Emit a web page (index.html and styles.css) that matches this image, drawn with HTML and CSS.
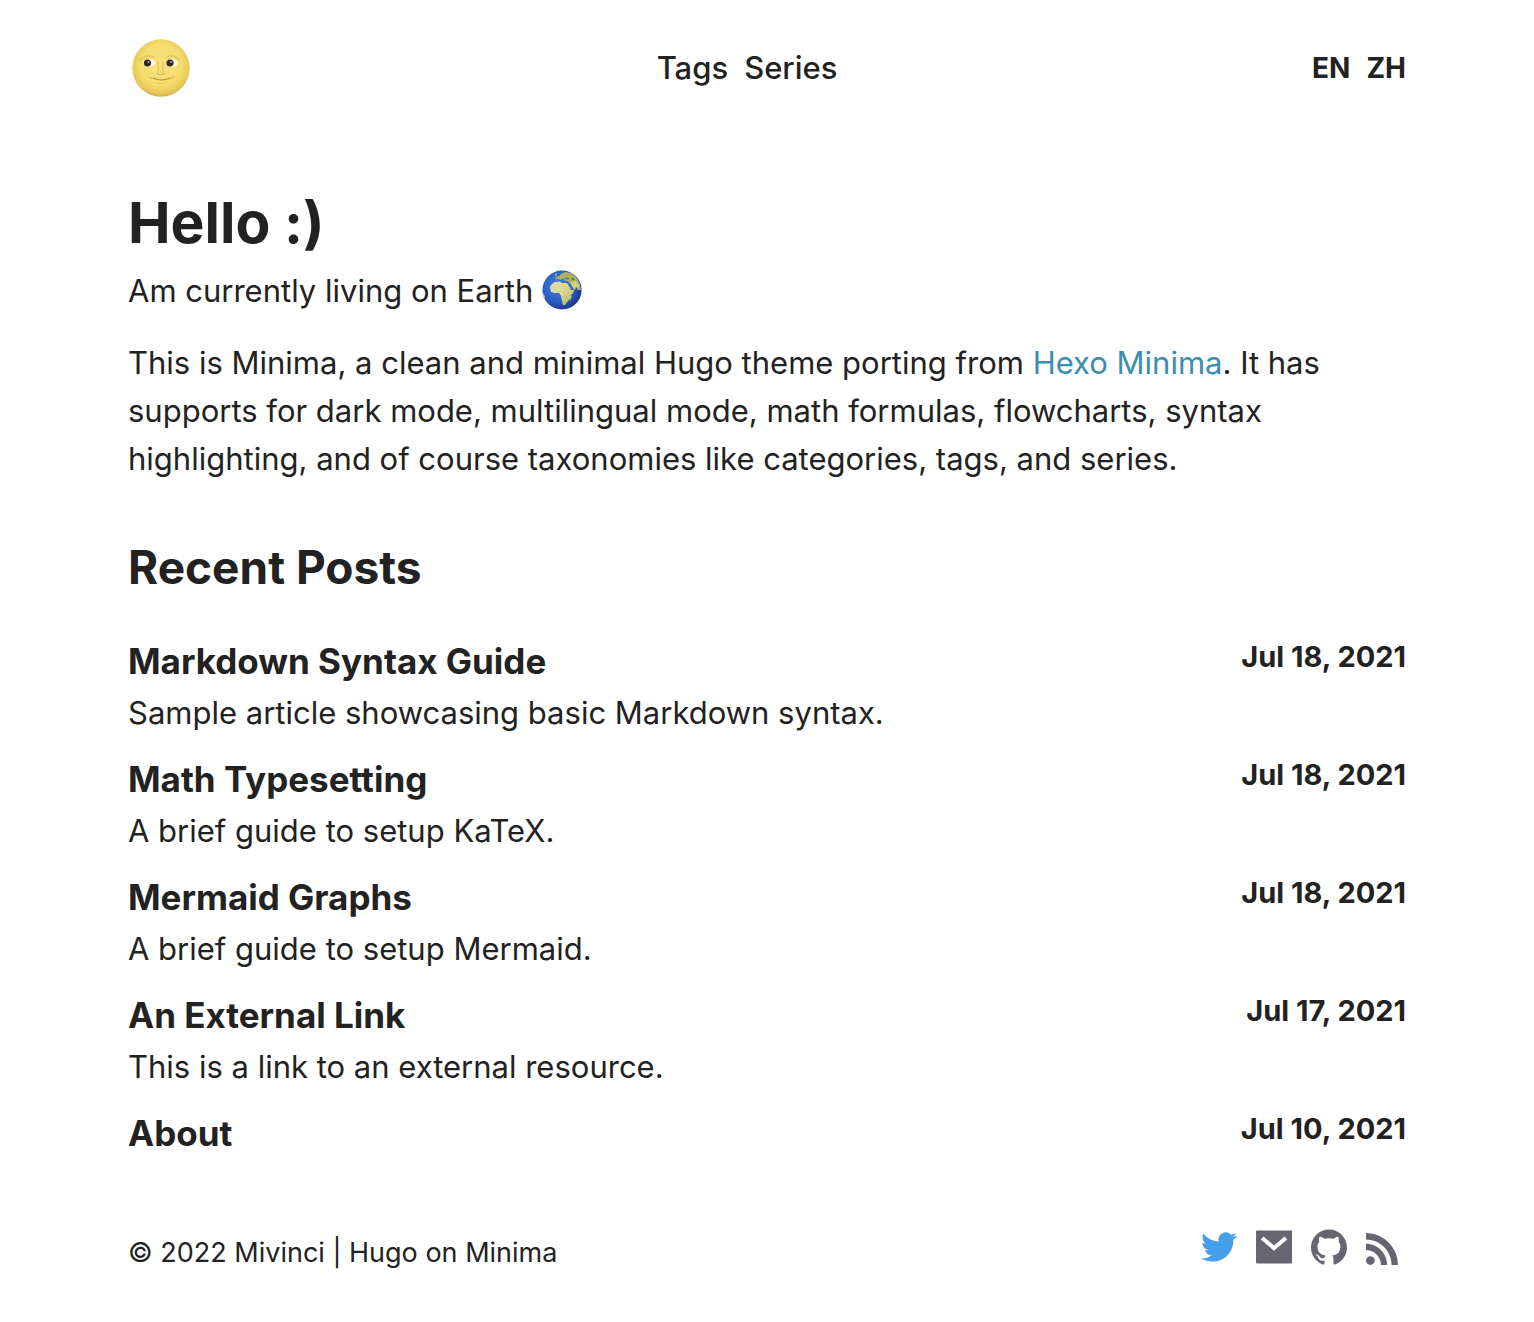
FILE: index.html
```html
<!DOCTYPE html>
<html lang="en">
<head>
<meta charset="utf-8">
<meta name="viewport" content="width=device-width, initial-scale=1">
<title>Minima</title>
<link rel="stylesheet" href="styles.css">
</head>
<body>
<header class="site-header">
  <a class="logo" href="#" aria-label="Home">
    <svg class="moon" viewBox="0 0 58 58" aria-hidden="true">
      <defs>
        <radialGradient id="moonFill" cx=".5" cy=".45" r=".55">
          <stop offset="0" stop-color="#f8e27d"/>
          <stop offset=".65" stop-color="#f5dc6e"/>
          <stop offset=".9" stop-color="#e8c957"/>
          <stop offset="1" stop-color="#d0ad50"/>
        </radialGradient>
      </defs>
      <circle cx="29" cy="29" r="28.7" fill="url(#moonFill)"/>
      <g fill="none" stroke="#d5b14b" stroke-linecap="round">
        <path d="M8 21q6-6 14-3M34 18q8-3 13 3" stroke-width="1.6" opacity=".5"/>
        <path d="M26 22q1 7 0 12M31 22v12" stroke-width="1.2" opacity=".6"/>
        <path d="M25 35q4 2 8 0M17 38q2 0 3 2M39 40q1-2 3-2" opacity=".9"/>
        <path d="M21 39q8 4 17 0" stroke="#b98b35" stroke-width="1.2"/>
        <path d="M25 44q4 1 8 0" opacity=".5"/>
      </g>
      <ellipse cx="17" cy="24" rx="6" ry="3.800" fill="#fffbea"/>
      <ellipse cx="40" cy="24" rx="6" ry="3.800" fill="#fffbea"/>
      <circle cx="15.500" cy="24" r="3.600" fill="#35271f"/>
      <circle cx="38" cy="24" r="3.600" fill="#35271f"/>
      <circle cx="16.500" cy="23" r=".8" fill="#fff"/>
      <circle cx="39" cy="23" r=".8" fill="#fff"/>
    </svg>
  </a>
  <nav class="menu">
    <a href="#">Tags</a>
    <a href="#">Series</a>
  </nav>
  <nav class="languages" aria-label="Language">
    <a href="#">EN</a>
    <a href="#">ZH</a>
  </nav>
</header>

<main>
  <section class="intro">
    <h1>Hello :)</h1>
    <p class="lead">Am currently living on Earth
      <svg class="earth" viewBox="0 0 40 40" role="img" aria-label="Earth">
        <defs>
          <radialGradient id="seaFill" cx=".4" cy=".4" r=".62">
            <stop offset="0" stop-color="#4a80dc"/>
            <stop offset=".65" stop-color="#2c5cc4"/>
            <stop offset="1" stop-color="#1b3585"/>
          </radialGradient>
          <linearGradient id="landFill" x1="0" y1="0" x2="1" y2="1">
            <stop offset="0" stop-color="#e3dfa6"/>
            <stop offset=".5" stop-color="#d9d48d"/>
            <stop offset="1" stop-color="#a9b860"/>
          </linearGradient>
          <clipPath id="globe"><circle cx="20" cy="20" r="19.600"/></clipPath>
        </defs>
        <g clip-path="url(#globe)">
          <path d="M0 0h40v40H0z" fill="url(#seaFill)"/>
          <path d="M8 17l2-3 3-2 5-.5 2 1.500 5 0 2 3 2 4 3 0-1 3-3 3 0 3-3 3-2 3-2 0-1-4-1-5-2-3-4 0-4-1z" fill="url(#landFill)"/>
          <path d="M13 9l1-2 3-1 2-2 4-2 6 1 5 4 4 7 1 6-3 0-2-3-1 3-3-1-3-6-1-2-3 0-1-2-2 0-1 1-3-1z" fill="#a7b15e"/>
          <path d="M29 12l5-1 3 5-1 3-2-3-1 3-3-2z" fill="#d9cf8d"/>
          <path d="M28 26l1.500-1-.5 4-1.500 1zM0 23l2 1 1 3-1 3-2-1zM13 4l2-1-1 3-1 0z" fill="#c5c36d"/>
          <path d="M23 8l4 1M30 8l2 2M28 14l3 5" fill="none" stroke="#315fae" stroke-width="1.200"/>
        </g>
      </svg>
    </p>
    <p>This is Minima, a clean and minimal Hugo theme porting from <a class="link" href="#">Hexo Minima</a>. It has supports for dark mode, multilingual mode, math formulas, flowcharts, syntax highlighting, and of course taxonomies like categories, tags, and series.</p>
  </section>

  <section class="posts">
    <h2>Recent Posts</h2>
    <article class="post">
      <div><h3><a href="#">Markdown Syntax Guide</a></h3><p>Sample article showcasing basic Markdown syntax.</p></div>
      <time datetime="2021-07-18">Jul 18, 2021</time>
    </article>
    <article class="post">
      <div><h3><a href="#">Math Typesetting</a></h3><p>A brief guide to setup KaTeX.</p></div>
      <time datetime="2021-07-18">Jul 18, 2021</time>
    </article>
    <article class="post">
      <div><h3><a href="#">Mermaid Graphs</a></h3><p>A brief guide to setup Mermaid.</p></div>
      <time datetime="2021-07-18">Jul 18, 2021</time>
    </article>
    <article class="post">
      <div><h3><a href="#">An External Link</a></h3><p>This is a link to an external resource.</p></div>
      <time datetime="2021-07-17">Jul 17, 2021</time>
    </article>
    <article class="post">
      <div><h3><a href="#">About</a></h3></div>
      <time datetime="2021-07-10">Jul 10, 2021</time>
    </article>
  </section>
</main>

<footer class="site-footer">
  <p>© 2022 Mivinci | <a href="#">Hugo on Minima</a></p>
  <nav class="social" aria-label="Social links">
    <a href="#" aria-label="Twitter"><svg class="icon twitter" viewBox="0 0 24 24"><path d="M23.953 4.57a10 10 0 01-2.825.775 4.958 4.958 0 002.163-2.723c-.951.555-2.005.959-3.127 1.184a4.92 4.92 0 00-8.384 4.482C7.69 8.095 4.067 6.13 1.64 3.162a4.822 4.822 0 00-.666 2.475c0 1.71.87 3.213 2.188 4.096a4.904 4.904 0 01-2.228-.616v.06a4.923 4.923 0 003.946 4.827 4.996 4.996 0 01-2.212.085 4.936 4.936 0 004.604 3.417 9.867 9.867 0 01-6.102 2.105c-.39 0-.779-.023-1.17-.067a13.995 13.995 0 007.557 2.209c9.053 0 13.998-7.496 13.998-13.985 0-.21 0-.42-.015-.63A9.935 9.935 0 0024 4.59z"/></svg></a>
    <a href="#" aria-label="Email"><svg class="icon" viewBox="0 0 36 36"><path fill-rule="evenodd" d="M1 1.500h34q1 0 1 1v31q0 1-1 1H1q-1 0-1-1v-31q0-1 1-1zM7.500 7.500L4.800 10.500 18 21.800 31.200 10.500 28.500 7.500 18 16.500z"/></svg></a>
    <a href="#" aria-label="GitHub"><svg class="icon" viewBox="0 0 24 24"><path d="M12 .297c-6.630 0-12 5.373-12 12 0 5.303 3.438 9.800 8.205 11.385.6.113.82-.258.82-.577 0-.285-.010-1.040-.015-2.040-3.338.724-4.042-1.610-4.042-1.610C4.422 18.070 3.633 17.700 3.633 17.700c-1.087-.744.084-.729.084-.729 1.205.084 1.838 1.236 1.838 1.236 1.070 1.835 2.809 1.305 3.495.998.108-.776.417-1.305.76-1.605-2.665-.3-5.466-1.332-5.466-5.930 0-1.310.465-2.380 1.235-3.220-.135-.303-.54-1.523.105-3.176 0 0 1.005-.322 3.300 1.230.96-.267 1.980-.399 3-.405 1.020.006 2.040.138 3 .405 2.280-1.552 3.285-1.230 3.285-1.230.645 1.653.24 2.873.12 3.176.765.840 1.230 1.910 1.230 3.220 0 4.610-2.805 5.625-5.475 5.920.42.360.81 1.096.81 2.220 0 1.606-.015 2.896-.015 3.286 0 .315.210.690.825.570C20.565 22.092 24 17.592 24 12.297c0-6.627-5.373-12-12-12"/></svg></a>
    <a href="#" aria-label="RSS"><svg class="icon rss" viewBox="0 0 24 24"><path d="M19.199 24C19.199 13.467 10.533 4.800 0 4.800V0c13.165 0 24 10.835 24 24h-4.801zM3.291 17.415c1.814 0 3.293 1.479 3.293 3.295 0 1.813-1.485 3.290-3.301 3.290C1.470 24 0 22.526 0 20.710s1.475-3.294 3.291-3.295zM15.909 24h-4.665c0-6.169-5.075-11.245-11.244-11.245V8.090c8.727 0 15.909 7.184 15.909 15.910z"/></svg></a>
  </nav>
</footer>
</body>
</html>
```
FILE: styles.css
```css
* { box-sizing: border-box; }

body {
  margin: 0;
  padding: 32px 128px;
  background: #fff;
  color: #222;
  font: 400 31px/48px Inter, "Liberation Sans", sans-serif;
}

h1, h2, h3, p { margin: 0; }
a { color: inherit; text-decoration: none; }
svg { display: block; }

.site-header {
  display: flex;
  justify-content: space-between;
  align-items: center;
  height: 72px;
}
.logo { padding-left: 4px; }
.moon { width: 58px; height: 58px; }
.menu { display: flex; gap: 16px; margin-right: 8px; font-weight: 500; }
.languages {
  display: flex;
  gap: 16px;
  font-size: 28px;
  font-weight: 700;
}

.intro { padding-top: 80px; }
h1 { font-size: 57px; line-height: 78px; font-weight: 700; }
.lead { margin: 5px 0 24px; }
.earth {
  display: inline-block;
  width: 40px;
  height: 40px;
  vertical-align: -8px;
}
.link { color: #3b8db1; }

.posts { padding-top: 48px; }
h2 { margin-bottom: 30px; font-size: 46px; line-height: 72px; font-weight: 700; }
.post { display: flex; justify-content: space-between; gap: 32px; margin-bottom: 12px; }
h3 { font-size: 35px; line-height: 56px; font-weight: 700; }
.post div { min-height: 56px; }
.post p { margin-bottom: 2px; }
time { font-size: 29px; font-weight: 700; white-space: nowrap; }

.site-footer {
  display: flex;
  justify-content: space-between;
  align-items: flex-start;
  padding-top: 56px;
  font-size: 27px;
}
.social { display: flex; align-items: flex-end; gap: 19px; padding-right: 8px; }
.icon { width: 36px; height: 36px; fill: #666571; }
.twitter { fill: #479fe9; }
.rss { width: 32px; height: 32px; }
```
